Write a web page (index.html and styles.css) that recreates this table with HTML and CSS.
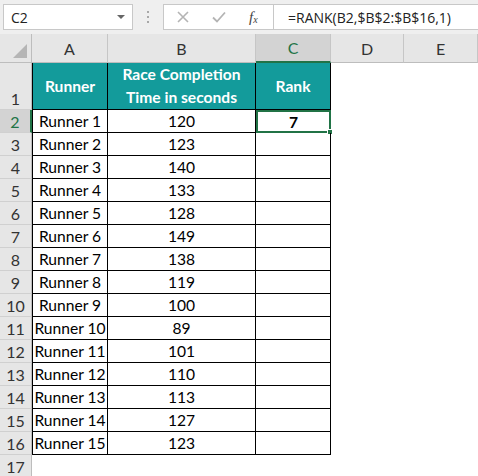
FILE: index.html
```html
<!DOCTYPE html>
<html>
<head>
<meta charset="utf-8">
<link rel="stylesheet" href="styles.css">
</head>
<body>
<div class="toolbar">
  <div class="namebox"><span class="ref">C2</span><span class="caret"></span></div>
  <div class="dots"><span></span><span></span><span></span></div>
  <div class="fbar">
    <div class="btns">
      <svg class="ico" width="14" height="14" viewBox="0 0 14 14"><path d="M2 2L12 12M12 2L2 12" stroke="#b4b4b4" stroke-width="1.6" fill="none"/></svg>
      <svg class="ico" width="16" height="14" viewBox="0 0 16 14"><path d="M2 7.5L6 11.5L14 2.5" stroke="#b4b4b4" stroke-width="1.8" fill="none"/></svg>
      <span class="fx">f<sub>x</sub></span>
    </div>
    <div class="formula">=RANK(B2,$B$2:$B$16,1)</div>
  </div>
</div>
<div class="sheet">
  <div class="corner"><span class="tri"></span></div>
  <div class="ch">A</div>
  <div class="ch">B</div>
  <div class="ch sel">C</div>
  <div class="ch">D</div>
  <div class="ch">E</div>

  <div class="rh tall">1</div>
  <div class="hd first">Runner</div>
  <div class="hd">Race Completion<br>Time in seconds</div>
  <div class="hd">Rank</div>
  <div class="blank"></div><div class="blank"></div>

  <div class="rh rsel">2</div><div class="c first">Runner 1</div><div class="c">120</div><div class="c active"><b>7</b><span class="handle"></span></div><div class="blank"></div><div class="blank"></div>
  <div class="rh">3</div><div class="c first">Runner 2</div><div class="c">123</div><div class="c"></div><div class="blank"></div><div class="blank"></div>
  <div class="rh">4</div><div class="c first">Runner 3</div><div class="c">140</div><div class="c"></div><div class="blank"></div><div class="blank"></div>
  <div class="rh">5</div><div class="c first">Runner 4</div><div class="c">133</div><div class="c"></div><div class="blank"></div><div class="blank"></div>
  <div class="rh">6</div><div class="c first">Runner 5</div><div class="c">128</div><div class="c"></div><div class="blank"></div><div class="blank"></div>
  <div class="rh">7</div><div class="c first">Runner 6</div><div class="c">149</div><div class="c"></div><div class="blank"></div><div class="blank"></div>
  <div class="rh">8</div><div class="c first">Runner 7</div><div class="c">138</div><div class="c"></div><div class="blank"></div><div class="blank"></div>
  <div class="rh">9</div><div class="c first">Runner 8</div><div class="c">119</div><div class="c"></div><div class="blank"></div><div class="blank"></div>
  <div class="rh">10</div><div class="c first">Runner 9</div><div class="c">100</div><div class="c"></div><div class="blank"></div><div class="blank"></div>
  <div class="rh">11</div><div class="c first">Runner 10</div><div class="c">89</div><div class="c"></div><div class="blank"></div><div class="blank"></div>
  <div class="rh">12</div><div class="c first">Runner 11</div><div class="c">101</div><div class="c"></div><div class="blank"></div><div class="blank"></div>
  <div class="rh">13</div><div class="c first">Runner 12</div><div class="c">110</div><div class="c"></div><div class="blank"></div><div class="blank"></div>
  <div class="rh">14</div><div class="c first">Runner 13</div><div class="c">113</div><div class="c"></div><div class="blank"></div><div class="blank"></div>
  <div class="rh">15</div><div class="c first">Runner 14</div><div class="c">127</div><div class="c"></div><div class="blank"></div><div class="blank"></div>
  <div class="rh">16</div><div class="c first">Runner 15</div><div class="c">123</div><div class="c"></div><div class="blank"></div><div class="blank"></div>
  <div class="rh">17</div><div class="blank"></div><div class="blank"></div><div class="blank"></div><div class="blank"></div><div class="blank"></div>
</div>
</body>
</html>
```
FILE: styles.css
```css
* { box-sizing: border-box; }
html, body { margin: 0; padding: 0; background: #fff; }
body {
  width: 478px; height: 476px; overflow: hidden;
  font-family: Lato, "Open Sans", sans-serif;
  color: #000;
}
.toolbar {
  height: 34px;
  background: #efefef;
  display: flex;
  align-items: center;
  padding: 0 0 0 3px;
}
.namebox {
  width: 130px; height: 26px;
  background: #fff;
  border: 1px solid #c8c8c8;
  display: flex; align-items: center; justify-content: space-between;
  padding: 0 5px 0 7px;
  font-family: "Open Sans", sans-serif;
  font-size: 14px; color: #222;
}
.caret {
  width: 0; height: 0;
  border-left: 4px solid transparent;
  border-right: 4px solid transparent;
  border-top: 4px solid #666;
  margin-right: 2px;
}
.dots {
  width: 30px; display: flex; flex-direction: column; align-items: center; gap: 3px;
}
.dots span { width: 2px; height: 2px; background: #a8a8a8; }
.fbar {
  flex: 1; height: 26px;
  display: flex;
  background: #fff;
  border: 1px solid #c8c8c8;
  border-right: none;
}
.btns {
  width: 109px; display: flex; align-items: center;
  padding-left: 12px;
}
.btns .ico { margin-right: 21px; }
.btns .ico + .ico { margin-right: 22px; }
.fx {
  font-family: "Liberation Serif", serif; font-style: italic; font-size: 15px; color: #444;
}
.fx sub { font-size: 10px; vertical-align: -1px; }
.formula {
  flex: 1; border-left: 1px solid #c8c8c8;
  display: flex; align-items: center; padding-left: 14px;
  font-family: "Open Sans", sans-serif; font-size: 14px; color: #222;
}
.sheet {
  display: grid;
  grid-template-columns: 32px 76px 148px 75px 73px 74px;
  grid-template-rows: 29px 47px repeat(16, 23px);
  font-size: 15.6px;
}
.corner {
  background: #e6e6e6;
  border-right: 1px solid #bdbdbd;
  border-bottom: 1px solid #bdbdbd;
  position: relative;
}
.tri {
  position: absolute; right: 4px; bottom: 4px;
  width: 0; height: 0;
  border-left: 14px solid transparent;
  border-bottom: 14px solid #b5b5b5;
}
.ch {
  background: #e6e6e6;
  border-right: 1px solid #c6c6c6;
  border-bottom: 1px solid #bdbdbd;
  display: flex; align-items: center; justify-content: center;
  font-size: 16px; color: #333;
}
.ch.sel { background: #d3d3d3; border-bottom: 2px solid #217346; color: #217346; }
.rh {
  background: #e6e6e6;
  border-right: 1px solid #bdbdbd;
  border-bottom: 1px solid #d0d0d0;
  display: flex; align-items: center; justify-content: center;
  font-size: 16px; color: #333;
}
.rh.tall { align-items: flex-end; padding-bottom: 1px; }
.rh.rsel { background: #d3d3d3; color: #217346; border-right: 2px solid #217346; }
.hd {
  background: #139b9b;
  color: #fff; font-weight: bold;
  border-right: 1px solid #000;
  border-bottom: 1px solid #000;
  display: flex; align-items: center; justify-content: center;
  text-align: center; line-height: 23px;
}
.c {
  border-right: 1px solid #000;
  border-bottom: 1px solid #000;
  display: flex; align-items: center; justify-content: center;
  position: relative;
}
.first { border-left: 1px solid #000; }
.c.active { border: 2px solid #217346; }
.handle {
  position: absolute; right: -4px; bottom: -4px;
  width: 6px; height: 6px; background: #217346; border: 1px solid #fff;
}
.blank { background: #fff; }
```
